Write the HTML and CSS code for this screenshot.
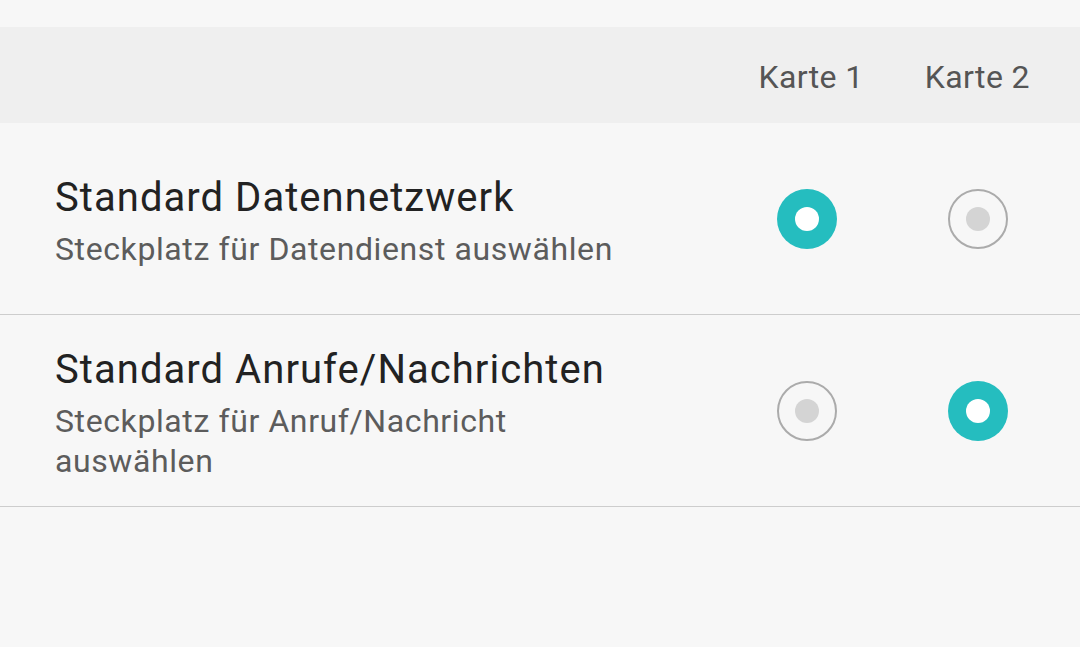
FILE: index.html
```html
<!DOCTYPE html>
<html lang="de">
<head>
<meta charset="utf-8">
<link rel="stylesheet" href="styles.css">
</head>
<body>
<div class="top"></div>
<div class="header">
  <div class="col-label">Karte 1</div>
  <div class="col-label">Karte 2</div>
</div>
<div class="row">
  <div class="text">
    <div class="title">Standard Datennetzwerk</div>
    <div class="sub">Steckplatz für Datendienst auswählen</div>
  </div>
  <div class="cell"><span class="radio on"></span></div>
  <div class="cell"><span class="radio"></span></div>
</div>
<div class="row">
  <div class="text">
    <div class="title">Standard Anrufe/Nachrichten</div>
    <div class="sub narrow">Steckplatz für Anruf/Nachricht auswählen</div>
  </div>
  <div class="cell"><span class="radio"></span></div>
  <div class="cell"><span class="radio on"></span></div>
</div>
</body>
</html>
```
FILE: styles.css
```css
html, body {
  margin: 0;
  padding: 0;
  background: #f7f7f7;
  font-family: Roboto, "Noto Sans", sans-serif;
}
.top {
  height: 27px;
}
.header {
  height: 96px;
  box-sizing: border-box;
  padding-top: 4px;
  background: #efefef;
  display: flex;
  justify-content: flex-end;
  align-items: center;
  gap: 61px;
  padding-right: 50px;
}
.col-label {
  font-size: 32px;
  letter-spacing: 0.4px;
  color: #555555;
}
.row {
  display: flex;
  align-items: center;
  height: 191px;
  padding-left: 55px;
  padding-right: 17px;
  border-bottom: 1px solid #cdcdcd;
}
.text {
  flex: 1;
  min-width: 0;
  padding-top: 5px;
}
.title {
  font-size: 40px;
  letter-spacing: 1.05px;
  color: #222222;
  line-height: 48px;
}
.sub {
  font-size: 32px;
  letter-spacing: 0.6px;
  color: #5c5c5c;
  line-height: 40px;
  margin-top: 7px;
}
.sub.narrow {
  max-width: 560px;
}
.cell {
  width: 171px;
  display: flex;
  justify-content: center;
}
.radio {
  width: 60px;
  height: 60px;
  border-radius: 50%;
  box-sizing: border-box;
  border: 2px solid #ababab;
  display: flex;
  align-items: center;
  justify-content: center;
}
.radio::after {
  content: "";
  width: 24px;
  height: 24px;
  border-radius: 50%;
  background: #d4d4d4;
}
.radio.on {
  border: none;
  background: #25bdbf;
}
.radio.on::after {
  background: #ffffff;
}
```
